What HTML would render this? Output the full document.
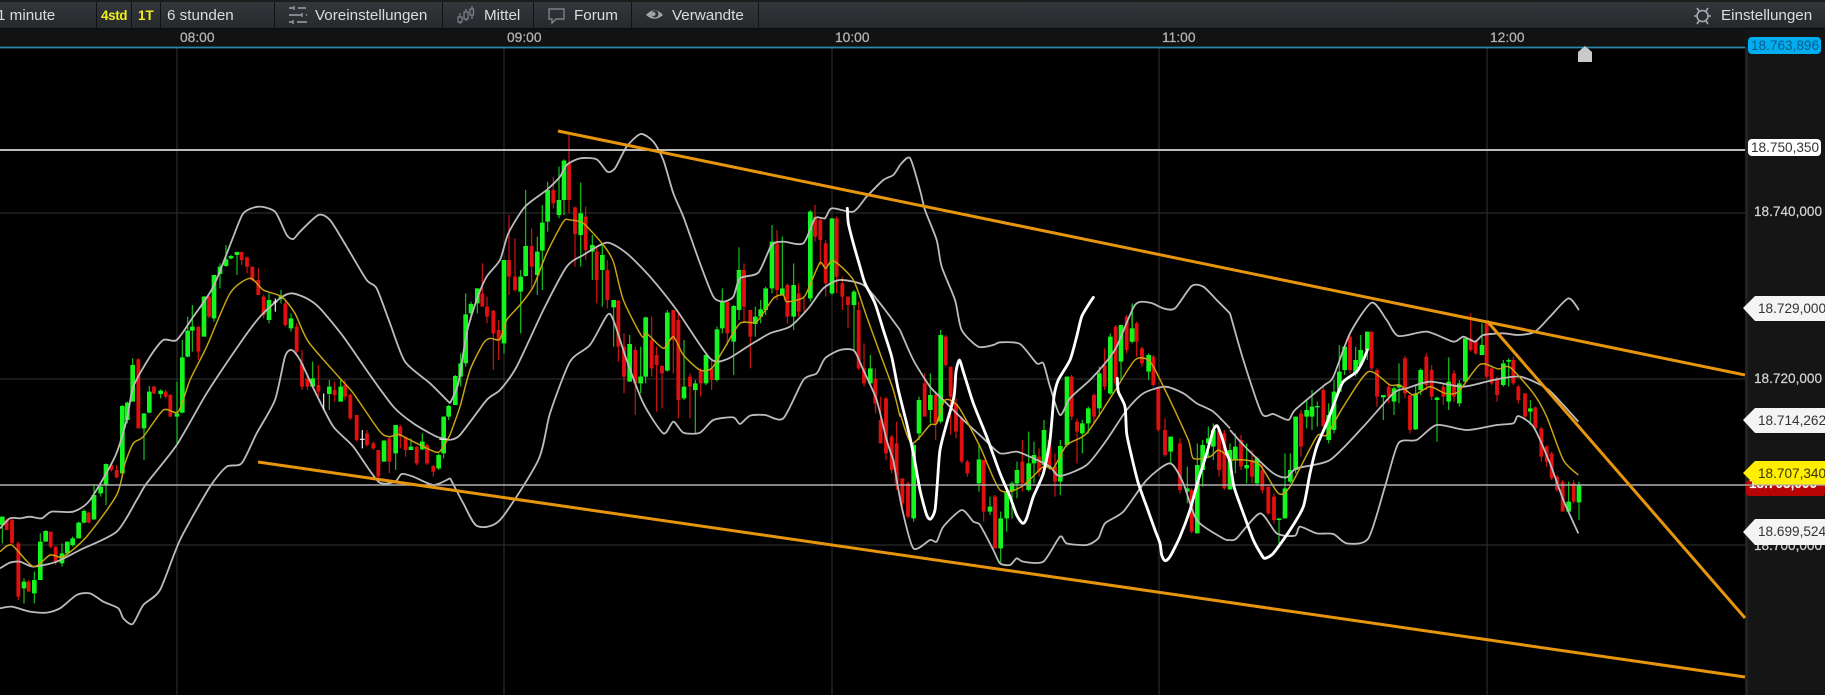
<!DOCTYPE html>
<html><head><meta charset="utf-8"><title>Chart</title>
<style>
html,body{margin:0;padding:0;background:#000;width:1825px;height:695px;overflow:hidden;font-family:"Liberation Sans",sans-serif}
.a{position:absolute;white-space:nowrap}
#tb{left:0;top:2px;width:1825px;height:27px;background:linear-gradient(#33373b,#26292c);border-bottom:1px solid #0a0a0a;box-sizing:border-box}
.t{top:7px;font-size:15.2px;line-height:18px;color:#dcdcdc}
.sep{top:2px;width:1px;height:27px;background:#101214}
.tm{top:29px;font-size:13.8px;line-height:17px;color:#b4b4b4;-webkit-text-stroke:.25px #b4b4b4}
.ax{left:1754px;font-size:13.6px;line-height:16px;color:#d4d4d4;-webkit-text-stroke:.2px #d4d4d4}
.lb{left:1758px;font-size:13.6px;line-height:16px;color:#333}
svg{position:absolute;left:0;top:0}
#chart{filter:blur(.35px)}
path,polyline{fill:none}
.gw{stroke:#14c01c;stroke-width:3.6}.gb{stroke:#14f41e;stroke-width:14}
.rw{stroke:#cc1414;stroke-width:3.6}.rb{stroke:#e01010;stroke-width:11.5}
.wh{stroke:#eee;stroke-width:3.6}
.b{stroke:#bcbcbc;stroke-width:5.4;stroke-linejoin:round}
.m{stroke:#c8a612;stroke-width:4.4;stroke-linejoin:round}
.h{stroke:#fff;stroke-width:8.5;stroke-linejoin:round;stroke-linecap:round}
</style></head><body>
<div class="a" style="left:0;top:0;width:1825px;height:2px;background:#1c1c1c"></div>
<div class="a" id="tb"></div>
<div class="a" style="left:0;top:29px;width:1825px;height:18px;background:#121212"></div>
<div class="a" style="left:1745px;top:29px;width:80px;height:666px;background:#151515"></div>
<div class="a" style="left:1745px;top:47px;width:3px;height:648px;background:#222"></div>

<svg id="chart" width="1825" height="695" viewBox="0 0 1825 695">
<g stroke="#2b2b2b" stroke-width="1.2">
<path d="M177 47V695M504 47V695M832 47V695M1159 47V695M1487 47V695"/>
<path d="M0 213H1745M0 379H1745M0 545H1745"/>
</g>
<path d="M0 47.5H1745" stroke="#2a86ad" stroke-width="1.8"/>

<g transform="translate(0,200) scale(.33333)">
<path class="gw" d="M7 950V1030M72 1135V1210M103 1115V1210M121 1000V1140M137 990V1025M186 1030V1100M202 1025V1065M218 1010V1040M236 965V1015M252 928V970M282 855V960M302 850V890M318 790V915M367 615V825M382 605V670M398 475V605M432 640V780M448 558V640M482 568V595M531 545V730M547 420V640M563 350V472M577 315V455M612 288V410M642 225V365M660 190V265M678 135V200M693 165V178M711 155V225M807 280V370M843 270V310M873 340V395M938 485V560M988 540V630M1022 535V605M1152 720V785M1187 675V810M1233 715V750M1267 700V750M1316 760V810M1331 650V775M1346 615V660"/>
<path class="gb" d="M7 950V975M72 1145V1165M103 1140V1180M121 1025V1140M137 993V1025M186 1060V1090M202 1025V1060M218 1015V1035M236 968V1015M252 933V968M282 885V958M302 860V880M318 792V855M367 618V820M382 608V660M398 495V605M432 640V685M448 575V638M482 572V582M531 640V650M547 472V638M563 392V470M577 380V392M612 290V410M642 225V355M660 200V222M678 178V198M693 168V175M711 156V165M807 300V360M843 287V297M873 355V385M938 535V560M988 560V582M1022 560V605M1152 722V785M1187 675V760M1233 740V750M1267 725V748M1316 765V805M1331 650V760M1346 618V650"/>
<path class="rw" d="M20 955V990M36 955V1030M55 1025V1200M86 1140V1175M152 995V1045M167 1040V1095M266 935V970M334 790V815M350 795V835M415 475V685M462 558V582M497 570V595M511 582V650M595 380V480M627 288V355M725 155V195M741 170V220M757 200V245M775 205V285M791 285V355M856 300V380M890 370V460M906 450V570M922 520V570M955 495V590M1004 545V605M1035 540V600M1051 580V660M1070 645V725M1101 690V740M1120 725V750M1135 750V840M1168 710V820M1201 675V745M1217 710V770M1250 740V795M1281 730V795M1300 795V830"/>
<path class="rb" d="M20 960V990M36 960V1030M55 1030V1190M86 1145V1175M152 995V1040M167 1040V1085M266 938V968M334 795V810M350 810V832M415 478V685M462 560V580M497 575V590M511 585V650M595 380V455M627 290V350M725 156V180M741 172V200M757 200V240M775 240V285M791 290V345M856 310V375M890 380V455M906 490V560M922 535V560M955 555V575M1004 570V585M1035 555V590M1051 585V655M1070 645V720M1101 700V735M1120 730V745M1135 750V830M1168 715V785M1201 680V710M1217 712V750M1250 740V790M1281 735V790M1300 798V815"/>
</g>

<g transform="translate(450,120) scale(.33333)">
<path class="gw" d="M16 765V855M32 700V800M47 520V740M63 545V600M82 505V580M162 420V700M212 450V640M227 210V470M262 350V525M277 255V510M293 185V335M327 140V295M342 118V285M392 188V440M427 345V480M457 375V560M491 540V680M539 645V785M572 680V820M587 590V790M652 570V755M702 660V840M736 780V940M768 700V795M801 620V785M817 505V640M851 555V765M867 382V600M916 560V650M932 540V610M947 500V585M966 315V520M997 350V525M1031 430V630M1081 270V545M1146 295V525M1212 510V690M1261 705V795"/>
<path class="gb" d="M16 768V855M32 730V770M47 583V730M63 552V580M82 505V550M162 420V670M212 470V515M227 378V468M262 395V465M277 308V392M293 210V305M327 240V285M342 122V240M392 280V345M427 375V395M457 405V450M491 540V562M539 672V785M572 770V790M587 592V770M652 578V752M702 800V835M736 790V810M768 705V790M801 628V780M817 545V625M851 558V665M867 450V570M916 590V612M932 568V590M947 505V570M966 365V505M997 505V525M1031 495V590M1081 275V535M1146 295V520M1212 515V555M1261 745V790"/>
<path class="rw" d="M97 430V560M111 530V610M130 570V750M146 600V720M177 285V525M195 355V515M245 325V510M310 170V265M357 45V280M375 260V440M407 260V420M440 380V550M472 420V565M505 540V725M522 640V820M556 680V885M605 590V770M620 680V875M636 735V865M670 570V760M685 575V895M720 760V895M752 745V830M785 715V810M832 545V675M882 430V605M901 570V745M981 330V540M1012 490V610M1046 490V590M1062 530V575M1095 255V365M1111 295V435M1127 360V530M1160 290V520M1177 470V570M1194 530V625M1226 545V750M1242 670V800M1277 800V880"/>
<path class="rb" d="M97 520V560M111 560V590M130 572V640M146 630V660M177 420V470M195 470V510M245 378V440M310 210V250M357 130V240M375 262V342M407 290V390M440 395V480M472 450V540M505 542V680M522 680V770M556 690V790M605 660V745M620 705V735M636 738V760M670 570V660M685 600V840M720 770V800M752 750V790M785 745V780M832 545V640M882 450V560M901 570V650M981 370V510M1012 495V590M1046 520V575M1095 290V350M1111 300V360M1127 370V490M1160 295V470M1177 490V530M1194 530V555M1226 570V745M1242 745V790"/>
</g>

<g transform="translate(830,190) scale(.33333)">
<path class="gw" d="M251 760V995M267 620V750M301 550V700M332 420V700M447 760V905M480 920V975M512 965V1120M530 900V1025M546 875V985M561 815V925M596 725V905M612 755V880M642 690V855M691 750V915M711 560V770M757 690V790M775 650V730M808 530V680M841 430V615M873 405V570M906 345V460"/>
<path class="gb" d="M251 765V985M267 630V730M301 615V660M332 435V695M447 808V880M480 950V965M512 985V1075M530 905V985M546 880V905M561 840V880M596 820V900M612 795V820M642 720V825M691 768V875M711 560V765M757 700V730M775 655V700M808 550V655M841 440V610M873 405V515M906 415V455"/>
<path class="rw" d="M136 535V660M152 620V760M168 620V810M185 735V850M200 695V900M217 865V950M234 875V985M284 550V640M317 610V750M347 435V530M362 530V735M378 625V745M395 680V820M412 810V860M461 810V995M495 915V1075M577 750V905M627 775V860M658 750V840M675 790V920M725 555V690M741 685V820M792 610V700M824 475V600M857 405V590M890 375V490"/>
<path class="rb" d="M136 565V640M152 690V760M168 625V790M185 740V840M200 760V880M217 865V940M234 880V980M284 580V680M317 615V700M347 440V525M362 530V620M378 640V725M395 685V815M412 815V850M461 810V965M495 920V1075M577 815V880M627 800V845M658 750V830M675 830V875M725 560V680M741 695V725M792 615V680M824 525V590M857 410V580M890 380V480"/>
</g>

<g transform="translate(1130,270) scale(.33333)">
<path class="gw" d="M7 100V215M56 250V330M122 500V580M172 590V700M202 520V790M218 510V650M235 470V560M250 460V570M300 520V660M316 490V610M350 520V640M381 560V645M447 745V820M465 550V745M481 550V640M497 440V610M530 390V475M546 360V480M562 395V470M596 400V520M612 330V490M628 225V370M644 225V315M677 230V320M692 195V290M712 185V270M760 375V450M792 350V435M807 280V400M857 345V480M872 295V375M921 380V515M956 262V420M988 330V410M1006 205V340M1056 160V255M1120 270V350M1136 265V350M1201 390V465M1316 635V725M1347 635V750"/>
<path class="gb" d="M7 175V215M56 255V305M122 500V545M172 655V665M202 585V790M218 525V600M235 505V520M250 480V530M300 540V658M316 530V570M350 585V595M381 565V640M447 745V750M465 655V745M481 600V635M497 440V600M530 420V440M546 410V440M562 408V412M596 435V510M612 365V480M628 305V365M644 230V300M677 270V310M692 240V285M712 185V240M760 375V382M792 355V395M807 345V352M857 370V478M872 300V360M921 383V390M956 335V395M988 340V400M1006 205V335M1056 225V255M1120 280V345M1136 270V275M1201 415V425M1316 695V725M1347 645V697"/>
<path class="rw" d="M20 155V260M36 230V290M70 255V350M85 350V485M105 445V560M150 505V670M185 655V790M267 470V620M283 480V660M333 495V600M366 540V640M397 580V670M415 650V735M432 670V760M513 420V560M580 350V470M660 195V310M725 185V300M741 295V410M776 345V400M825 258V385M840 375V490M889 250V360M905 285V390M940 340V405M972 300V395M1022 130V245M1037 210V255M1070 160V325M1085 290V345M1101 320V395M1150 260V345M1165 345V400M1185 370V445M1216 410V480M1234 470V575M1250 525V590M1265 545V630M1281 615V665M1298 630V725M1331 630V700"/>
<path class="rb" d="M20 160V215M36 235V280M70 260V345M85 355V480M105 480V555M150 520V660M185 660V785M267 480V600M283 490V655M333 510V590M366 570V620M397 600V660M415 650V730M432 680V750M513 430V530M580 360V470M660 200V300M725 185V295M741 300V380M776 350V380M825 265V370M840 375V480M889 260V345M905 300V380M940 350V380M972 310V380M1022 205V240M1037 215V250M1070 160V320M1085 295V340M1101 330V375M1150 270V340M1165 350V390M1185 370V440M1216 412V475M1234 475V560M1250 530V575M1265 550V625M1281 620V660M1298 635V725M1331 640V695"/>
</g>

<g transform="translate(0,200) scale(.33333)">
<polyline class="b" points="0,985 30,955 60,955 90,950 125,955 155,935 220,935 270,900 345,770 380,660 400,560 450,470 490,420 530,420 580,350 640,260 700,110 730,40 775,20 825,35 860,105 880,117 900,95 955,45 990,60 1040,140 1100,240 1130,265 1170,370 1215,485 1290,550 1350,610"/>
<polyline class="b" points="0,1105 30,1088 60,1085 100,1100 170,1085 240,1050 350,995 410,900 440,850 530,735 620,580 720,430 780,350 840,295 875,280 920,295 960,325 1030,410 1110,525 1180,620 1240,670 1310,710 1350,720"/>
<polyline class="b" points="0,1225 35,1220 90,1235 140,1238 180,1225 230,1185 270,1180 310,1205 355,1225 370,1255 398,1272 430,1215 480,1170 540,1020 630,860 680,800 725,790 770,700 825,600 855,470 875,450 900,480 950,585 1000,680 1060,740 1135,845 1185,845 1205,822 1240,830 1300,855 1350,835"/>
<polyline class="m" points="0,1055 35,1035 100,1100 150,1065 190,1070 260,1010 350,885 375,790 400,730 430,710 490,630 535,635 570,540 620,440 690,280 750,235 790,270 845,290 885,340 925,425 1020,535 1060,580 1140,695 1170,710 1195,703 1240,725 1310,757 1330,740 1350,705"/>
<path class="wh" d="M826 295V335M820 306H832M971 580V630M1087 690V745M1080 718H1094M1318 718H1342"/>
</g>
<g transform="translate(450,120) scale(.33333)">
<polyline class="b" points="0,850 25,790 50,640 80,540 110,470 150,420 175,340 225,260 290,210 330,170 350,135 390,115 440,118 472,155 495,145 530,80 572,42 610,65 640,120 670,220 700,290 750,430 790,530 820,545 850,530 870,475 925,458 965,375 1000,365 1060,370 1095,295 1125,295 1145,265 1210,275 1250,230 1300,180 1330,165 1350,135"/>
<polyline class="b" points="0,960 30,945 110,840 150,810 200,740 280,570 350,440 400,405 470,368 530,400 600,470 680,570 780,715 830,718 900,675 960,640 1020,620 1075,565 1120,505 1170,480 1240,495 1290,550 1350,630"/>
<polyline class="b" points="0,1074 40,1150 81,1218 150,1200 265,1020 300,880 360,725 420,675 472,585 490,600 530,720 580,850 640,940 670,905 700,938 750,938 790,900 850,892 870,912 900,887 945,885 1000,895 1060,780 1100,760 1125,715 1170,690 1212,692 1240,750 1280,840 1310,960 1330,1020"/>
<polyline class="m" points="0,945 30,860 60,750 100,670 120,655 150,658 170,600 210,555 250,500 290,400 340,305 360,300 400,310 460,375 490,425 520,540 575,648 590,640 640,685 670,650 700,705 750,750 785,745 820,690 870,610 920,605 970,535 1000,525 1010,545 1060,533 1080,495 1110,428 1127,445 1150,422 1210,480 1250,590 1290,700 1330,810 1350,890"/>
</g>
<g transform="translate(830,190) scale(.33333)">
<polyline class="b" points="210,-75 240,-96 270,0 285,60 320,150 335,230 375,330 395,420 445,470 490,465 510,457 570,462 620,520 640,520 660,590 690,675 720,625 780,570 825,520 860,470 915,345 960,338 1000,355 1035,355 1085,288 1120,290 1160,330 1200,370"/>
<polyline class="b" points="210,420 250,510 300,590 340,630 400,690 460,745 510,790 560,785 610,805 660,830 690,858 770,825 830,750 890,660 940,610 1005,590 1060,610 1100,640 1150,665 1200,715"/>
<polyline class="b" points="190,810 215,950 250,1075 300,1050 320,1055 340,1010 395,960 430,995 450,1005 490,1080 510,1120 540,1125 560,1105 580,1115 640,1115 690,1040 710,1060 770,1065 805,1045 825,1000 880,965 950,870 1020,820 1060,880 1100,990 1170,1040 1190,1050 1200,1050"/>
<polyline class="m" points="210,670 245,760 300,705 320,700 345,630 385,650 450,770 510,900 575,890 640,830 670,835 710,765 770,730 850,610 915,510 960,515 1010,610 1075,750 1090,805 1140,800 1165,780 1195,800"/>
</g>
<g transform="translate(1130,270) scale(.33333)">
<polyline class="b" points="300,130 340,270 395,430 430,432 475,450 495,420 580,348 610,320 660,190 725,98 770,150 805,198 890,185 970,215 1000,200 1035,215 1060,195 1120,190 1165,195 1215,185 1260,140 1315,85 1347,120"/>
<polyline class="b" points="300,480 350,535 430,610 470,622 500,595 600,570 700,470 790,370 830,355 900,335 1000,350 1090,330 1170,320 1250,355 1300,405 1345,455"/>
<polyline class="b" points="300,810 320,805 390,730 440,790 495,797 510,770 560,790 610,792 650,820 715,805 765,650 805,520 860,510 920,465 1010,480 1100,465 1150,460 1165,438 1210,470 1260,580 1300,690 1345,790"/>
<polyline class="m" points="300,570 345,570 390,585 445,670 480,650 560,500 590,495 640,410 715,305 780,345 810,345 850,375 900,350 945,370 985,365 1050,283 1105,297 1140,292 1210,370 1250,440 1300,570 1345,615"/>
</g>

<path d="M0 150H1745" stroke="#d4d4d4" stroke-width="1.7"/>
<path d="M0 485H1825" stroke="#b0b0b0" stroke-width="1.4"/>
<g stroke="#e8950e" stroke-width="3" fill="none">
<path d="M558 131L1745 375"/>
<path d="M258 462L1745 677"/>
<path d="M1487 321L1745 618"/>
</g>
<g transform="translate(830,190) scale(.33333)">
<polyline class="h" points="52,55 55,100 70,160 90,230 105,280 135,340 160,420 185,500 205,600 230,700 250,790 270,900 290,975 302,987 315,960 322,880 330,780 350,700 372,620 378,545 388,510 400,545 430,640 470,740 510,850 540,920 560,975 578,1000 590,985 610,920 640,850 660,750 672,620 685,570 720,510 740,440 755,380 775,345 790,322"/>
<polyline class="h" points="862,565 865,605 885,650 890,730 905,800 925,880 950,950 975,1020 990,1060 995,1095 1005,1112 1020,1100 1050,1040 1080,960 1105,870 1130,790 1150,720 1162,708 1175,740 1190,790 1200,815 1212,890 1240,970 1270,1050 1295,1095 1305,1105 1330,1090 1380,1020 1420,950 1440,850 1460,770 1490,700 1520,620 1540,575 1580,545 1600,510 1612,480"/>
</g>

<polygon points="1578,62 1578,52 1585,46 1592,52 1592,62" fill="#c9c9c9"/>
</svg>

<svg width="1825" height="695" viewBox="0 0 1825 695">
<rect x="1748" y="37" width="73" height="17" rx="4" fill="#00aef0"/>
<rect x="1748" y="139" width="73" height="17" rx="4" fill="#fff"/>
<rect x="1746" y="480" width="79" height="16" rx="3" fill="#b80404"/>
<polygon points="1743,308 1755,296 1825,296 1825,321 1755,321" fill="#f4f4f4"/>
<polygon points="1743,420 1755,408 1825,408 1825,433 1755,433" fill="#f4f4f4"/>

<!-- toolbar icons -->
<g stroke="#8e9296" stroke-width="1.8" fill="none">
<path d="M289 8H294M298 8H306M289 15H302M306 15H307M289 22H293M297 22H307"/>
<path d="M294 6V10M302 13V17M293 20V24" stroke-width="1.5"/>
</g>
<g stroke="#80848a" stroke-width="1.2" fill="none">
<rect x="458" y="17" width="4" height="5"/><path d="M460 13V17M460 22V24"/>
<rect x="464" y="12" width="4" height="7"/><path d="M466 9V12M466 19V21"/>
<rect x="470" y="9" width="3.500" height="6"/><path d="M472 6V9M472 15V19"/>
</g>
<path d="M549 9H564V19H556L552 23V19H549Z" stroke="#7e8286" stroke-width="1.4"/>
<path d="M646 15Q654.500 5.500 663 15Q654.500 22.500 646 15Z" style="fill:#a2a6aa"/>
<circle cx="655" cy="14" r="3.500" fill="#2e3236"/>
<circle cx="653.500" cy="14" r="2" fill="#a2a6aa"/>
<g stroke="#a6aaae" stroke-width="1.6" fill="none">
<circle cx="1702.500" cy="16" r="5.500"/>
<path d="M1694 16H1697M1708 16H1711M1697 8L1699 11M1708 8L1706 11M1697 24L1699 21M1708 24L1706 21"/>
</g>
</svg>

<div class="a sep" style="left:96px"></div><div class="a sep" style="left:131px"></div><div class="a sep" style="left:160px"></div><div class="a sep" style="left:274px"></div><div class="a sep" style="left:442px"></div><div class="a sep" style="left:533px"></div><div class="a sep" style="left:631px"></div><div class="a sep" style="left:758px"></div>

<div class="a t" style="left:-3px">1 minute</div>
<div class="a t" style="left:101px;color:#f0ee20;font-size:13.5px;font-weight:bold;letter-spacing:-.4px">4std</div>
<div class="a t" style="left:138px;color:#f0ee20;font-size:13.5px;font-weight:bold">1T</div>
<div class="a t" style="left:167px">6 stunden</div>
<div class="a t" style="left:315px">Voreinstellungen</div>
<div class="a t" style="left:484px">Mittel</div>
<div class="a t" style="left:574px">Forum</div>
<div class="a t" style="left:672px">Verwandte</div>
<div class="a t" style="left:1721px">Einstellungen</div>

<div class="a tm" style="left:180px">08:00</div>
<div class="a tm" style="left:507px">09:00</div>
<div class="a tm" style="left:835px">10:00</div>
<div class="a tm" style="left:1162px">11:00</div>
<div class="a tm" style="left:1490px">12:00</div>

<div class="a ax" style="left:1751px;top:38px;color:#0a5c8c;-webkit-text-stroke:0">18.763,896</div>
<div class="a ax" style="left:1751px;top:140px;color:#333;-webkit-text-stroke:0">18.750,350</div>
<div class="a ax" style="top:204px">18.740,000</div>
<div class="a ax" style="top:371px">18.720,000</div>
<div class="a lb" style="top:301px">18.729,000</div>
<div class="a lb" style="top:413px">18.714,262</div>
<div class="a ax" style="left:1749px;top:476px;color:#fff;font-weight:bold">18.705,000</div>
<div class="a ax" style="top:538px">18.700,000</div>

<svg width="1825" height="695" viewBox="0 0 1825 695">
<polygon points="1743,473 1755,461 1825,461 1825,485 1755,485" fill="#ffee00"/>
<polygon points="1743,532 1755,519 1825,519 1825,545 1755,545" fill="#f4f4f4"/>
<path d="M1745 485H1825" stroke="#b0b0b0" stroke-width="1.2"/>
</svg>
<div class="a lb" style="top:466px;color:#3a3600">18.707,340</div>
<div class="a lb" style="top:524px">18.699,524</div>

<script>
(function(){var S='http://www.w3.org/2000/svg';
document.querySelectorAll('#chart polyline').forEach(function(pl){
var p=pl.getAttribute('points').trim().split(/\s+/).map(function(s){return s.split(',').map(Number)});
var d='M'+p[0][0]+' '+p[0][1];
for(var i=0;i<p.length-1;i++){var a=p[Math.max(i-1,0)],b=p[i],c=p[i+1],e=p[Math.min(i+2,p.length-1)],k=0.12;
d+='C'+(b[0]+(c[0]-a[0])*k).toFixed(1)+' '+(b[1]+(c[1]-a[1])*k).toFixed(1)+' '+(c[0]-(e[0]-b[0])*k).toFixed(1)+' '+(c[1]-(e[1]-b[1])*k).toFixed(1)+' '+c[0]+' '+c[1];}
var q=document.createElementNS(S,'path');q.setAttribute('class',pl.getAttribute('class'));q.setAttribute('d',d);pl.parentNode.replaceChild(q,pl);});
})();
</script>
</body></html>
